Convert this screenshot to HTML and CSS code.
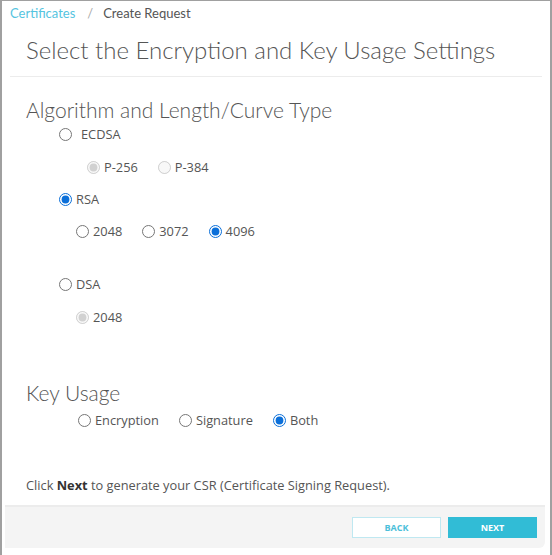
FILE: index.html
```html
<!DOCTYPE html>
<html>
<head>
<meta charset="utf-8">
<link rel="stylesheet" href="styles.css">
</head>
<body>
<div class="frame">
  <div class="crumbs"><a class="crumb-link">Certificates</a><span class="crumb-sep">/</span><span class="crumb-cur">Create Request</span></div>
  <h1 class="title">Select the Encryption and Key Usage Settings</h1>
  <div class="rule"></div>

  <h2 class="section">Algorithm and Length/Curve Type</h2>
  <div class="row lvl1 r-ecdsa"><label class="opt wide"><input type="radio" name="alg"><span>ECDSA</span></label></div>
  <div class="row lvl2 ecc r-p256">
    <label class="opt"><input type="radio" name="ec" checked disabled><span>P-256</span></label>
    <label class="opt"><input type="radio" name="ec" disabled><span>P-384</span></label>
  </div>
  <div class="row lvl1 r-rsa"><label class="opt"><input type="radio" name="alg" checked><span>RSA</span></label></div>
  <div class="row lvl3 r-rsasz">
    <label class="opt"><input type="radio" name="rsa"><span>2048</span></label>
    <label class="opt"><input type="radio" name="rsa"><span>3072</span></label>
    <label class="opt"><input type="radio" name="rsa" checked><span>4096</span></label>
  </div>
  <div class="row lvl1 r-dsa"><label class="opt"><input type="radio" name="alg"><span>DSA</span></label></div>
  <div class="row lvl3 r-dsasz"><label class="opt"><input type="radio" name="dsa" checked disabled><span>2048</span></label></div>

  <h2 class="section ku">Key Usage</h2>
  <div class="row lvlk r-ku">
    <label class="opt"><input type="radio" name="ku"><span>Encryption</span></label>
    <label class="opt"><input type="radio" name="ku"><span>Signature</span></label>
    <label class="opt"><input type="radio" name="ku" checked><span>Both</span></label>
  </div>

  <p class="note">Click <b>Next</b> to generate your CSR (Certificate Signing Request).</p>

  <div class="footer">
    <button class="btn btn-back">BACK</button>
    <button class="btn btn-next">NEXT</button>
  </div>
</div>
</body>
</html>
```

FILE: styles.css
```css
html, body {
  margin: 0;
  padding: 0;
  background: #ffffff;
}
body {
  font-family: "Open Sans", "Liberation Sans", sans-serif;
  font-size: 12.8px;
  color: #555555;
}
.frame {
  box-sizing: border-box;
  width: 552px;
  height: 555px;
  border-top: 1px solid #a0a0a0;
  border-left: 2px solid #a0a0a0;
  border-right: 2px solid #a0a0a0;
  display: flex;
  flex-direction: column;
}
.crumbs {
  height: 25px;
  line-height: 25px;
  padding-left: 8px;
  font-family: "Lato", sans-serif;
  font-size: 13px;
  display: flex;
}
.crumb-link { color: #55c4df; }
.crumb-sep { color: #aaaaaa; margin: 0 10px 0 12px; }
.crumb-cur { color: #555555; }
.title {
  margin: 9px 0 0 0;
  padding-left: 24px;
  height: 30px;
  line-height: 30px;
  font-family: "Lato", sans-serif;
  font-weight: 300;
  font-size: 24px;
  color: #555555;
}
.rule {
  margin: 11px 8px 0 8px;
  height: 1px;
  background: #ececec;
}
.section {
  margin: 21px 0 0 0;
  padding-left: 24px;
  height: 24px;
  line-height: 24px;
  font-family: "Lato", sans-serif;
  font-weight: 300;
  font-size: 21px;
  color: #555555;
}
.section.ku { margin-top: 54px; }
.row {
  display: flex;
  gap: 20px;
  height: 20px;
  align-items: center;
}
.lvl1 { padding-left: 57px; }
.lvl2 { padding-left: 85px; }
.lvl3 { padding-left: 74px; }
.lvlk { padding-left: 76px; }
.r-ecdsa { margin-top: 2px; }
.r-p256 { margin-top: 13px; }
.r-rsa { margin-top: 12px; }
.r-rsasz { margin-top: 12px; }
.r-dsa { margin-top: 33px; }
.r-dsasz { margin-top: 13px; }
.r-ku { margin-top: 5px; }
.opt {
  display: flex;
  align-items: center;
  gap: 4px;
}
.opt.wide { gap: 9px; }
.opt input {
  margin: 0;
  width: 13px;
  height: 13px;
  accent-color: #0b6fd9;
}
.note {
  margin: 45px 0 0 0;
  padding-left: 24px;
  height: 20px;
  line-height: 20px;
}
.note b { color: #333333; font-weight: 700; }
.footer {
  box-sizing: border-box;
  margin: 10px 5px 0 3px;
  height: 43px;
  background: #f4f4f4;
  border-top: 2px solid #ececec;
  border-bottom-right-radius: 6px;
  display: flex;
  justify-content: flex-end;
  align-items: flex-start;
  padding: 10px 8px 0 0;
  gap: 7px;
}
.btn {
  width: 89px;
  height: 21px;
  font-family: "Open Sans", sans-serif;
  font-size: 9px;
  font-weight: 700;
  padding: 0;
  cursor: pointer;
}
.btn-back {
  background: #ffffff;
  color: #4cc0da;
  border: 1px solid #bfe8f1;
}
.btn-next {
  background: #31bcd6;
  color: #ffffff;
  border: 1px solid #31bcd6;
}
```
